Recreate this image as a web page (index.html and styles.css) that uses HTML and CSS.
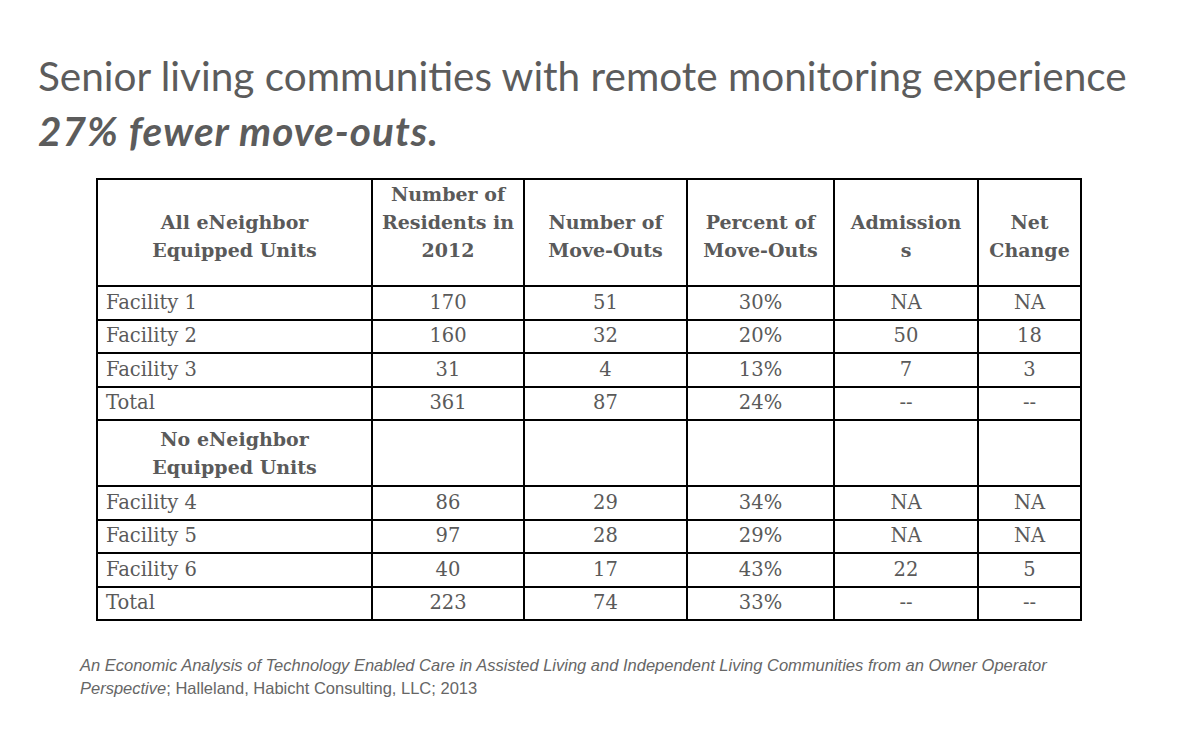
FILE: index.html
```html
<!DOCTYPE html>
<html>
<head>
<meta charset="utf-8">
<link rel="stylesheet" href="styles.css">
</head>
<body>
<div class="slide">
  <h1 class="title">Senior living communities with remote monitoring experience<br><em>27% fewer move-outs.</em></h1>
  <table class="data">
    <colgroup>
      <col class="c1"><col class="c2"><col class="c3"><col class="c4"><col class="c5"><col class="c6">
    </colgroup>
    <tr class="head">
      <th>All eNeighbor<br>Equipped Units</th>
      <th>Number of<br>Residents in<br>2012</th>
      <th>Number of<br>Move-Outs</th>
      <th>Percent of<br>Move-Outs</th>
      <th>Admission<br>s</th>
      <th>Net<br>Change</th>
    </tr>
    <tr><td class="name">Facility 1</td><td>170</td><td>51</td><td>30%</td><td>NA</td><td>NA</td></tr>
    <tr><td class="name">Facility 2</td><td>160</td><td>32</td><td>20%</td><td>50</td><td>18</td></tr>
    <tr><td class="name">Facility 3</td><td>31</td><td>4</td><td>13%</td><td>7</td><td>3</td></tr>
    <tr><td class="name">Total</td><td>361</td><td>87</td><td>24%</td><td>--</td><td>--</td></tr>
    <tr class="sub"><th>No eNeighbor<br>Equipped Units</th><td></td><td></td><td></td><td></td><td></td></tr>
    <tr><td class="name">Facility 4</td><td>86</td><td>29</td><td>34%</td><td>NA</td><td>NA</td></tr>
    <tr><td class="name">Facility 5</td><td>97</td><td>28</td><td>29%</td><td>NA</td><td>NA</td></tr>
    <tr><td class="name">Facility 6</td><td>40</td><td>17</td><td>43%</td><td>22</td><td>5</td></tr>
    <tr><td class="name">Total</td><td>223</td><td>74</td><td>33%</td><td>--</td><td>--</td></tr>
  </table>
  <p class="source"><em>An Economic Analysis of Technology Enabled Care in Assisted Living and Independent Living Communities from an Owner Operator Perspective</em>; Halleland, Habicht Consulting, LLC; 2013</p>
</div>
</body>
</html>
```
FILE: styles.css
```css
html, body {
  margin: 0;
  padding: 0;
  background: #ffffff;
}
.slide {
  width: 1195px;
  height: 729px;
  padding: 48px 0 0 38px;
  box-sizing: border-box;
}
.title {
  margin: 0;
  font-family: "Lato", "Open Sans", sans-serif;
  font-weight: 400;
  font-size: 40.5px;
  line-height: 55px;
  color: #5c5c5c;
}
.title em {
  font-weight: 700;
  font-style: italic;
  letter-spacing: 1px;
}
.data {
  margin: 20px 0 0 58px;
  border-collapse: collapse;
  font-family: "DejaVu Serif", "Liberation Serif", serif;
  font-size: 19.5px;
  color: #5a5a5a;
  table-layout: fixed;
}
.c1 { width: 275px; }
.c2 { width: 152px; }
.c3 { width: 163px; }
.c4 { width: 147px; }
.c5 { width: 144px; }
.c6 { width: 103px; }
.data th, .data td {
  border: 2px solid #000;
  text-align: center;
  padding: 0 8px;
  height: 31.5px;
  line-height: 28px;
}
.data th {
  font-weight: 700;
  font-size: 19px;
}
.data .head th {
  height: 105px;
  vertical-align: bottom;
  padding-bottom: 21px;
  box-sizing: border-box;
}
.data .sub th, .data .sub td {
  height: 64px;
}
.data td.name {
  text-align: left;
}
.source {
  margin: 33px 0 0 42px;
  width: 1000px;
  font-family: "Liberation Sans", Arial, sans-serif;
  font-size: 16.5px;
  line-height: 23px;
  color: #666666;
}
```
